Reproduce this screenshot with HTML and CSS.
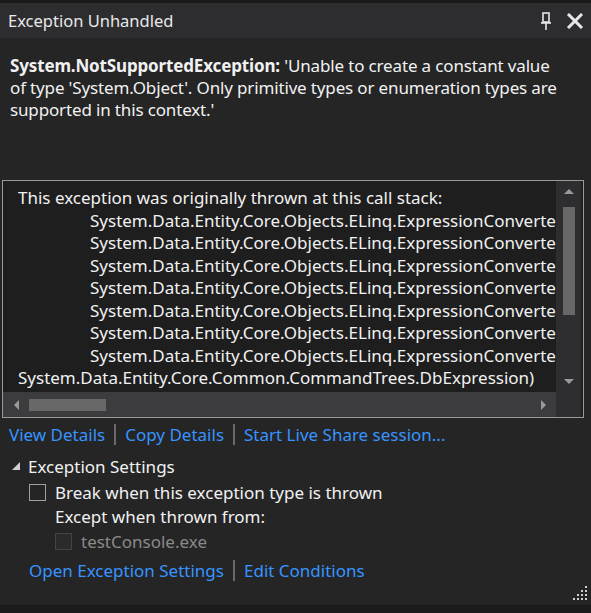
FILE: index.html
```html
<!DOCTYPE html>
<html lang="en">
<head>
  <meta charset="UTF-8">
  <title>Exception Unhandled</title>
  <link rel="stylesheet" href="styles.css">
</head>
<body>
  <!-- Exception Helper Window -->
  <div class="window">
    <div class="title-bar">
      <span class="title">Exception Unhandled</span>
      <div class="title-icons">
        <svg class="pin" width="12" height="18" viewBox="0 0 12 18">
          <rect x="3" y="1" width="6" height="9" fill="none" stroke="#e6e6e6" stroke-width="1.6"/>
          <rect x="1" y="10" width="10" height="1.8" fill="#e6e6e6"/>
          <rect x="5.2" y="11" width="1.6" height="7" fill="#e6e6e6"/>
        </svg>
        <svg class="close" width="18" height="16" viewBox="0 0 18 16">
          <path d="M2 1 L16 15 M16 1 L2 15" stroke="#e6e6e6" stroke-width="3"/>
        </svg>
      </div>
    </div>

    <div class="content">
      <!-- Message -->
      <p class="message"><b>System.NotSupportedException:</b> 'Unable to create a constant value of type 'System.Object'. Only primitive types or enumeration types are supported in this context.'</p>

      <!-- Call Stack -->
      <div class="stack">
        <div class="stack-text">
          <div>This exception was originally thrown at this call stack:</div>
          <div class="frame">System.Data.Entity.Core.Objects.ELinq.ExpressionConverter.ConstantTranslator.TypedTranslate</div>
          <div class="frame">System.Data.Entity.Core.Objects.ELinq.ExpressionConverter.TypedTranslator</div>
          <div class="frame">System.Data.Entity.Core.Objects.ELinq.ExpressionConverter.TranslateExpression</div>
          <div class="frame">System.Data.Entity.Core.Objects.ELinq.ExpressionConverter.EqualsTranslator</div>
          <div class="frame">System.Data.Entity.Core.Objects.ELinq.ExpressionConverter.TypedTranslator</div>
          <div class="frame">System.Data.Entity.Core.Objects.ELinq.ExpressionConverter.TranslateExpression</div>
          <div class="frame">System.Data.Entity.Core.Objects.ELinq.ExpressionConverter.TranslateLambda</div>
          <div>System.Data.Entity.Core.Common.CommandTrees.DbExpression)</div>
        </div>
        <div class="vscroll">
          <svg width="12" height="8" viewBox="0 0 12 8"><polygon points="1,7 6,2 11,7" fill="#9a9a9a"/></svg>
          <div class="vthumb"></div>
          <svg class="down" width="12" height="8" viewBox="0 0 12 8"><polygon points="1,1 6,6 11,1" fill="#9a9a9a"/></svg>
        </div>
        <div class="hscroll">
          <svg width="8" height="12" viewBox="0 0 8 12"><polygon points="7,1 2,6 7,11" fill="#9a9a9a"/></svg>
          <div class="hthumb"></div>
          <svg class="right" width="8" height="12" viewBox="0 0 8 12"><polygon points="1,1 6,6 1,11" fill="#9a9a9a"/></svg>
        </div>
        <div class="corner"></div>
      </div>

      <!-- Links -->
      <div class="links">
        <a href="#">View Details</a>
        <span class="sep"></span>
        <a href="#">Copy Details</a>
        <span class="sep"></span>
        <a href="#">Start Live Share session...</a>
      </div>

      <!-- Exception Settings -->
      <div class="settings">
        <div class="settings-head">
          <svg width="9" height="9" viewBox="0 0 9 9"><polygon points="8,0 8,8 0,8" fill="#d0d0d0"/></svg>
          <span>Exception Settings</span>
        </div>
        <div class="settings-body">
          <label class="check-row"><span class="box"></span>Break when this exception type is thrown</label>
          <div class="except">
            <div>Except when thrown from:</div>
            <label class="check-row disabled"><span class="box"></span>testConsole.exe</label>
          </div>
          <div class="links">
            <a href="#">Open Exception Settings</a>
            <span class="sep"></span>
            <a href="#">Edit Conditions</a>
          </div>
        </div>
      </div>
    </div>

    <svg class="grip" width="16" height="16" viewBox="0 0 16 16">
      <rect x="13" y="1" width="2" height="2" fill="#cfcfcf"/>
      <rect x="9" y="5" width="2" height="2" fill="#cfcfcf"/>
      <rect x="13" y="5" width="2" height="2" fill="#cfcfcf"/>
      <rect x="5" y="9" width="2" height="2" fill="#cfcfcf"/>
      <rect x="9" y="9" width="2" height="2" fill="#cfcfcf"/>
      <rect x="13" y="9" width="2" height="2" fill="#cfcfcf"/>
      <rect x="1" y="13" width="2" height="2" fill="#cfcfcf"/>
      <rect x="5" y="13" width="2" height="2" fill="#cfcfcf"/>
      <rect x="9" y="13" width="2" height="2" fill="#cfcfcf"/>
      <rect x="13" y="13" width="2" height="2" fill="#cfcfcf"/>
    </svg>
  </div>
</body>
</html>
```

FILE: styles.css
```css
/* Reset */
* {
  margin: 0;
  padding: 0;
  box-sizing: border-box;
}

body {
  background: #1b1b1c;
  font-family: 'Noto Sans', sans-serif;
  font-size: 17px;
  color: #f1f1f1;
}

/* Window */
.window {
  position: relative;
  width: 591px;
  height: 602px;
  margin-top: 3px;
  background: #252526;
  display: flex;
  flex-direction: column;
}

.title-bar {
  height: 35px;
  background: #2d2d30;
  display: flex;
  align-items: center;
  justify-content: space-between;
  padding: 0 7px 0 8px;
}

.title {
  font-size: 16.5px;
  color: #e8e8e8;
}

.title-icons {
  display: flex;
  align-items: center;
  gap: 14px;
}

/* Content */
.content {
  padding: 17px 0 0 0;
}

.message {
  padding: 0 28px 0 10px;
  line-height: 22px;
  letter-spacing: -0.15px;
}

.message b {
  font-weight: 700;
}

/* Call Stack Box */
.stack {
  margin: 59px 7px 0 2px;
  height: 238px;
  border: 1px solid #9a9a9a;
  background: #1e1e1e;
  display: grid;
  grid-template-columns: 1fr 25px;
  grid-template-rows: 1fr 25px;
  padding-right: 2px;
}

.stack-text {
  overflow: hidden;
  white-space: nowrap;
  padding: 6px 0 0 15px;
  margin-bottom: 4px;
  line-height: 22.5px;
}

.stack-text .frame {
  padding-left: 72px;
}

.vscroll {
  background: #2e2e30;
  display: flex;
  flex-direction: column;
  align-items: center;
  padding: 6px 0 6px;
}

.vthumb {
  width: 12px;
  height: 108px;
  background: #686868;
  margin-top: 12px;
}

.vscroll .down {
  margin-top: auto;
}

.hscroll {
  background: #3c3c3e;
  display: flex;
  align-items: center;
  padding: 0 8px 0 9px;
}

.hthumb {
  width: 77px;
  height: 12px;
  background: #686868;
  margin-left: 9px;
}

.hscroll .right {
  margin-left: auto;
}

.corner {
  background: #2e2e30;
}

/* Links */
.links {
  display: flex;
  align-items: center;
  gap: 9px;
  padding: 0 0 0 9px;
  height: 32px;
}

.links a {
  color: #3794ff;
  text-decoration: none;
}

.sep {
  width: 2px;
  height: 21px;
  background: #6a6a6a;
}

/* Settings */
.settings {
  padding: 4px 0 0 12px;
}

.settings-head {
  display: flex;
  align-items: center;
  gap: 7px;
  height: 25px;
}

.settings-body {
  padding-left: 17px;
}

.check-row {
  display: flex;
  align-items: center;
  gap: 9px;
  height: 26px;
}

.box {
  width: 17px;
  height: 17px;
  border: 1px solid #a0a0a0;
}

.except {
  padding-left: 26px;
  line-height: 24px;
}

.except .check-row {
  height: 25px;
}

.check-row.disabled {
  color: #8a8a8a;
}

.check-row.disabled .box {
  border-color: #444446;
  background: #2b2b2c;
}

.settings-body .links {
  padding: 0;
  height: 33px;
}

.grip {
  position: absolute;
  right: 3px;
  bottom: 4px;
}
```
